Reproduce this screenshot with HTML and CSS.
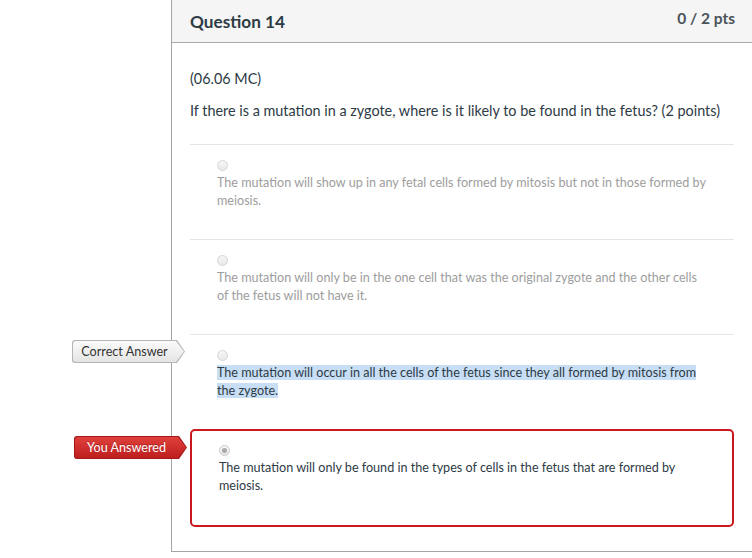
FILE: index.html
```html
<!DOCTYPE html>
<html>
<head>
<meta charset="utf-8">
<link rel="stylesheet" href="styles.css">
</head>
<body>
<div class="page">
  <div class="gutter"></div>
  <div class="question">
    <div class="q-header">
      <div class="q-title">Question 14</div>
      <div class="q-pts">0 / 2 pts</div>
    </div>
    <div class="q-body">
      <p class="q-code">(06.06 MC)</p>
      <p class="q-text">If there is a mutation in a zygote, where is it likely to be found in the fetus? (2 points)</p>
      <div class="answers">
        <div class="answer muted">
          <span class="radio"></span>
          <div class="a-text">The mutation will show up in any fetal cells formed by mitosis but not in those formed by meiosis.</div>
        </div>
        <div class="answer muted">
          <span class="radio"></span>
          <div class="a-text">The mutation will only be in the one cell that was the original zygote and the other cells of the fetus will not have it.</div>
        </div>
        <div class="answer correct">
          <span class="tag tag-correct">Correct Answer</span>
          <span class="radio"></span>
          <div class="a-text"><span class="sel">The mutation will occur in all the cells of the fetus since they all formed by mitosis from </span><br><span class="sel">the zygote.</span></div>
        </div>
        <div class="answer wrong">
          <span class="tag tag-wrong">You Answered</span>
          <span class="radio checked"></span>
          <div class="a-text">The mutation will only be found in the types of cells in the fetus that are formed by meiosis.</div>
        </div>
      </div>
    </div>
  </div>
</div>
</body>
</html>
```

FILE: styles.css
```css
html, body {
  margin: 0;
  padding: 0;
  background: #fff;
  overflow: hidden;
}

body {
  font-family: Lato, "Liberation Sans", sans-serif;
  color: #2d3b45;
}

.page {
  display: flex;
  width: 752px;
  height: 558px;
}

.gutter {
  width: 171px;
  flex: none;
}

.question {
  flex: 1;
  border-left: 1px solid #a5a5a5;
  border-bottom: 1px solid #a5a5a5;
  align-self: flex-start;
}

.q-header {
  display: flex;
  justify-content: space-between;
  align-items: flex-start;
  height: 43px;
  box-sizing: border-box;
  background: #f5f5f5;
  border-bottom: 1px solid #aaaaaa;
  padding: 0 17px 0 18px;
}

.q-title {
  font-size: 17.2px;
  font-weight: bold;
  line-height: 20px;
  margin-top: 12px;
  color: #2d3b45;
}

.q-pts {
  font-size: 15.5px;
  font-weight: bold;
  line-height: 18px;
  margin-top: 9px;
  color: #4a5358;
}

.q-body {
  padding: 26px 18px 24px 18px;
}

.q-code {
  margin: 0;
  font-size: 14.4px;
  line-height: 20px;
}

.q-text {
  margin: 12px 0 23px 0;
  font-size: 14.4px;
  line-height: 20px;
}

.answer {
  position: relative;
  z-index: 0;
  border-top: 1px solid #e6e6e6;
  padding: 15px 27px 29px 27px;
}

.answer.wrong {
  border: 2px solid #c9191e;
  border-radius: 5px;
  padding: 14px 27px 30px 27px;
}

.radio {
  display: block;
  width: 9px;
  height: 9px;
  border-radius: 50%;
  border: 1px solid #d6d6d6;
  background: linear-gradient(#f6f6f6, #e9e9e9);
  margin-bottom: 3px;
  position: relative;
}

.radio.checked {
  border-color: #c8c8c8;
}

.radio.checked::after {
  content: "";
  position: absolute;
  left: 2px;
  top: 2px;
  width: 5px;
  height: 5px;
  border-radius: 50%;
  background: #a9a9a9;
}

.a-text {
  font-size: 12.6px;
  line-height: 18px;
  color: #2d3b45;
}

.muted .a-text {
  color: #9d9d9d;
}

.sel {
  background: #c8def5;
}

.tag {
  position: absolute;
  top: 5px;
  right: calc(100% + 5px);
  box-sizing: border-box;
  width: 113px;
  height: 23px;
  line-height: 23px;
  padding: 0 8px 0 0;
  text-align: center;
  font-size: 12.6px;
  white-space: nowrap;
  z-index: 0;
}

.tag::before,
.tag::after {
  content: "";
  position: absolute;
  z-index: -1;
  border-radius: 3px 0 0 3px;
  clip-path: polygon(0 0, calc(100% - 8px) 0, 100% 50%, calc(100% - 8px) 100%, 0 100%);
}

.tag::before {
  inset: 0;
}

.tag::after {
  inset: 1px 1px 1px 1px;
}

.tag-correct {
  color: #333;
}

.tag-correct::before {
  background: #b5b5b5;
}

.tag-correct::after {
  background: linear-gradient(#fbfbfb, #e4e4e4);
}

.tag-wrong {
  top: 5px;
  right: calc(100% + 5px);
  color: #fff;
  text-shadow: 0 -1px 0 rgba(0, 0, 0, 0.25);
}

.tag-wrong::before {
  background: #a51818;
}

.tag-wrong::after {
  background: linear-gradient(#e0403b, #bd1f1f);
}
```
